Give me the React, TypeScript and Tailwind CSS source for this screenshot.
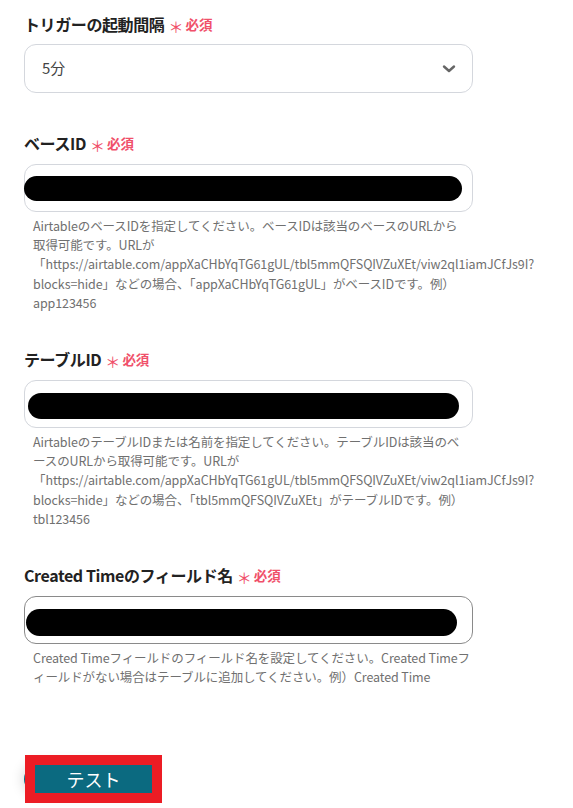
import React from "react";

const FONT = { fontFamily: '"Noto Sans CJK JP", "Noto Sans", sans-serif' };

function Label({ text }: { text: string }) {
  return (
    <div className="flex h-[20px] items-center">
      <span className="text-[16px] font-bold tracking-[-0.4px] text-[#222]">{text}</span>
      <span className="ml-[4px] mt-[5px] text-[15px] leading-none text-[#f0506a]">＊</span>
      <span className="ml-[2px] text-[13.5px] font-bold text-[#f0506a]">必須</span>
    </div>
  );
}

function Help({ lines }: { lines: string[] }) {
  return (
    <div className="mt-[4px] pl-[9px] text-[12.5px] leading-[19.2px] tracking-[-0.1px] text-[#707070]">
      {lines.map((l, i) => (
        <div key={i} className="h-[19.2px] whitespace-nowrap">
          {l}
        </div>
      ))}
    </div>
  );
}

function RedactedInput({ dark, bar }: { dark?: boolean; bar: { l: number; r: number; t: number; h: number } }) {
  return (
    <div
      className={`relative mt-[11px] h-[48px] w-[449px] rounded-[12px] border bg-white ${
        dark ? "border-[#8a8a8a]" : "border-[#d4d7dd]"
      }`}
    >
      <div
        className="absolute rounded-full bg-black"
        style={{ left: bar.l, right: bar.r, top: bar.t, height: bar.h }}
      />
    </div>
  );
}

export default function App() {
  return (
    <div className="min-h-[808px] w-[573px] overflow-hidden bg-white" style={FONT}>
      <div className="px-[24px] pt-[14px]">
        {/* Trigger interval */}
        <Label text="トリガーの起動間隔" />
        <div className="mt-[10px] flex h-[49px] w-[449px] items-center justify-between rounded-[12px] border border-[#d4d7dd] pl-[17px] pr-[16px]">
          <span className="text-[15px] text-[#444]">5分</span>
          <svg width="14" height="10" viewBox="0 0 14 10" fill="none">
            <path d="M2 2.5 L7 7 L12 2.5" stroke="#666" strokeWidth="2.4" strokeLinecap="round" strokeLinejoin="round" />
          </svg>
        </div>

        {/* Base ID */}
        <div className="mt-[40px]">
          <Label text="ベースID" />
          <RedactedInput bar={{ l: -1, r: 10, t: 11, h: 25 }} />
          <Help
            lines={[
              "AirtableのベースIDを指定してください。ベースIDは該当のベースのURLから",
              "取得可能です。URLが",
              "「https://airtable.com/appXaCHbYqTG61gUL/tbl5mmQFSQIVZuXEt/viw2ql1iamJCfJs9I?",
              "blocks=hide」などの場合、「appXaCHbYqTG61gUL」がベースIDです。例）",
              "app123456",
            ]}
          />
        </div>

        {/* Table ID */}
        <div className="mt-[37px]">
          <Label text="テーブルID" />
          <RedactedInput bar={{ l: 3, r: 13, t: 12, h: 26 }} />
          <Help
            lines={[
              "AirtableのテーブルIDまたは名前を指定してください。テーブルIDは該当のベ",
              "ースのURLから取得可能です。URLが",
              "「https://airtable.com/appXaCHbYqTG61gUL/tbl5mmQFSQIVZuXEt/viw2ql1iamJCfJs9I?",
              "blocks=hide」などの場合、「tbl5mmQFSQIVZuXEt」がテーブルIDです。例）",
              "tbl123456",
            ]}
          />
        </div>

        {/* Created Time */}
        <div className="mt-[37px]">
          <Label text="Created Timeのフィールド名" />
          <RedactedInput dark bar={{ l: 1, r: 15, t: 12, h: 27 }} />
          <Help
            lines={[
              "Created Timeフィールドのフィールド名を設定してください。Created Timeフ",
              "ィールドがない場合はテーブルに追加してください。例）Created Time",
            ]}
          />
        </div>

        {/* Test button */}
        <div className="relative mt-[69px] h-[48px] w-[140px]">
          <div className="absolute left-[0px] top-[9px] h-[30px] w-[128px] rounded-full bg-[#0b6a80] shadow-[0_0_14px_rgba(0,0,0,0.2)]" />
          <div className="absolute left-[1px] top-0 flex h-[48px] w-[137px] items-center justify-center border-[10px] border-[#ec1c24] bg-[#0b6a80]">
            <span className="text-[18px] text-white">テスト</span>
          </div>
        </div>
      </div>
    </div>
  );
}
